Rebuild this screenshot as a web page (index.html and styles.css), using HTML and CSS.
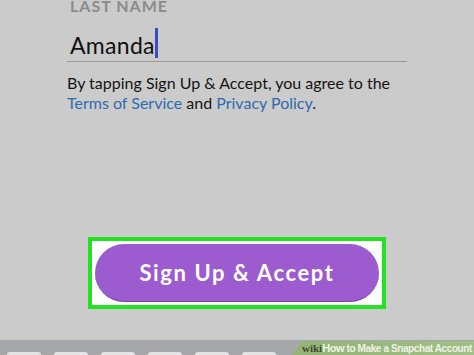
FILE: index.html
```html
<!DOCTYPE html>
<html lang="en">

<head>
    <meta charset="UTF-8">
    <meta name="viewport" content="width=device-width, initial-scale=1.0">
    <title>Sign Up</title>
    <link rel="stylesheet" href="styles.css">
</head>

<body>
    <main class="screen">
        <div class="form">
            <div class="label">LAST NAME</div>
            <div class="field">
                <span class="value">Amanda</span><span class="cursor"></span>
            </div>
            <p class="terms">By tapping Sign Up &amp; Accept, you agree to the <a href="#">Terms of Service</a> and <a href="#">Privacy Policy</a>.</p>
        </div>

        <div class="cta">
            <div class="highlight">
                <button class="signup">Sign Up &amp; Accept</button>
            </div>
        </div>
    </main>

    <footer class="strip">
        <div class="tabs">
            <span class="tab"></span>
            <span class="tab"></span>
            <span class="tab"></span>
            <span class="tab"></span>
            <span class="tab"></span>
            <span class="tab"></span>
        </div>
        <div class="banner"><b class="wiki">wiki</b><b class="how">How</b> to Make a Snapchat Account</div>
    </footer>
</body>

</html>
```

FILE: styles.css
```css
* {
    box-sizing: border-box;
}

body {
    margin: 0;
    width: 474px;
    height: 355px;
    overflow: hidden;
    display: flex;
    flex-direction: column;
    background-color: #cbcbcb;
    font-family: Lato, "Open Sans", sans-serif;
}

.screen {
    flex: 1;
}

.form {
    margin-left: 67px;
    width: 340px;
}

.label {
    margin-top: -4px;
    padding-left: 3px;
    font-size: 16px;
    font-weight: 700;
    letter-spacing: 1px;
    color: #8b8b8b;
    line-height: 19px;
}

.field {
    display: flex;
    align-items: flex-end;
    height: 47px;
    padding-left: 3px;
    padding-bottom: 3px;
    border-bottom: 1px solid #999;
}

.value {
    font-size: 23px;
    color: #111;
    line-height: 26px;
    letter-spacing: 0.3px;
}

.cursor {
    width: 3px;
    height: 30px;
    background-color: #3b4cc0;
}

.terms {
    margin: 11px 0 0;
    font-size: 16px;
    line-height: 20px;
    color: #141414;
}

.terms a {
    color: #2d6aae;
    text-decoration: none;
}

.cta {
    display: flex;
    margin-top: 124px;
    padding-left: 88px;
}

.highlight {
    width: 298px;
    height: 72px;
    padding: 3px;
    border: 4px solid #22e322;
    background-color: #fff;
}

.signup {
    display: block;
    width: 100%;
    height: 100%;
    border: none;
    border-bottom: 1px solid #7b44a6;
    border-radius: 30px;
    background-color: #9c5bce;
    color: #fff;
    font-family: Lato, sans-serif;
    font-size: 22px;
    font-weight: 700;
    letter-spacing: 1.6px;
}

.strip {
    display: flex;
    justify-content: space-between;
    align-items: flex-end;
    height: 15px;
    background-color: #a5a7aa;
}

.tabs {
    display: flex;
    gap: 13px;
    padding-left: 7px;
}

.tab {
    width: 34px;
    height: 3px;
    border-radius: 3px 3px 0 0;
    background-color: #e4e4e4;
}

.banner {
    width: 182px;
    height: 14px;
    padding-left: 10px;
    clip-path: polygon(10px 0, 100% 0, 100% 100%, 0 100%);
    background: linear-gradient(90deg, #94b377, #a1bf86);
    color: #eef3e6;
    font-family: "Liberation Sans", Arial, sans-serif;
    font-size: 10px;
    font-weight: 700;
    letter-spacing: -0.4px;
    line-height: 14px;
    white-space: nowrap;
    overflow: hidden;
}

.wiki {
    font-family: "Liberation Serif", serif;
    color: #3d4a2c;
    font-size: 11px;
    letter-spacing: 0;
}

.how {
    font-size: 11px;
}
```
